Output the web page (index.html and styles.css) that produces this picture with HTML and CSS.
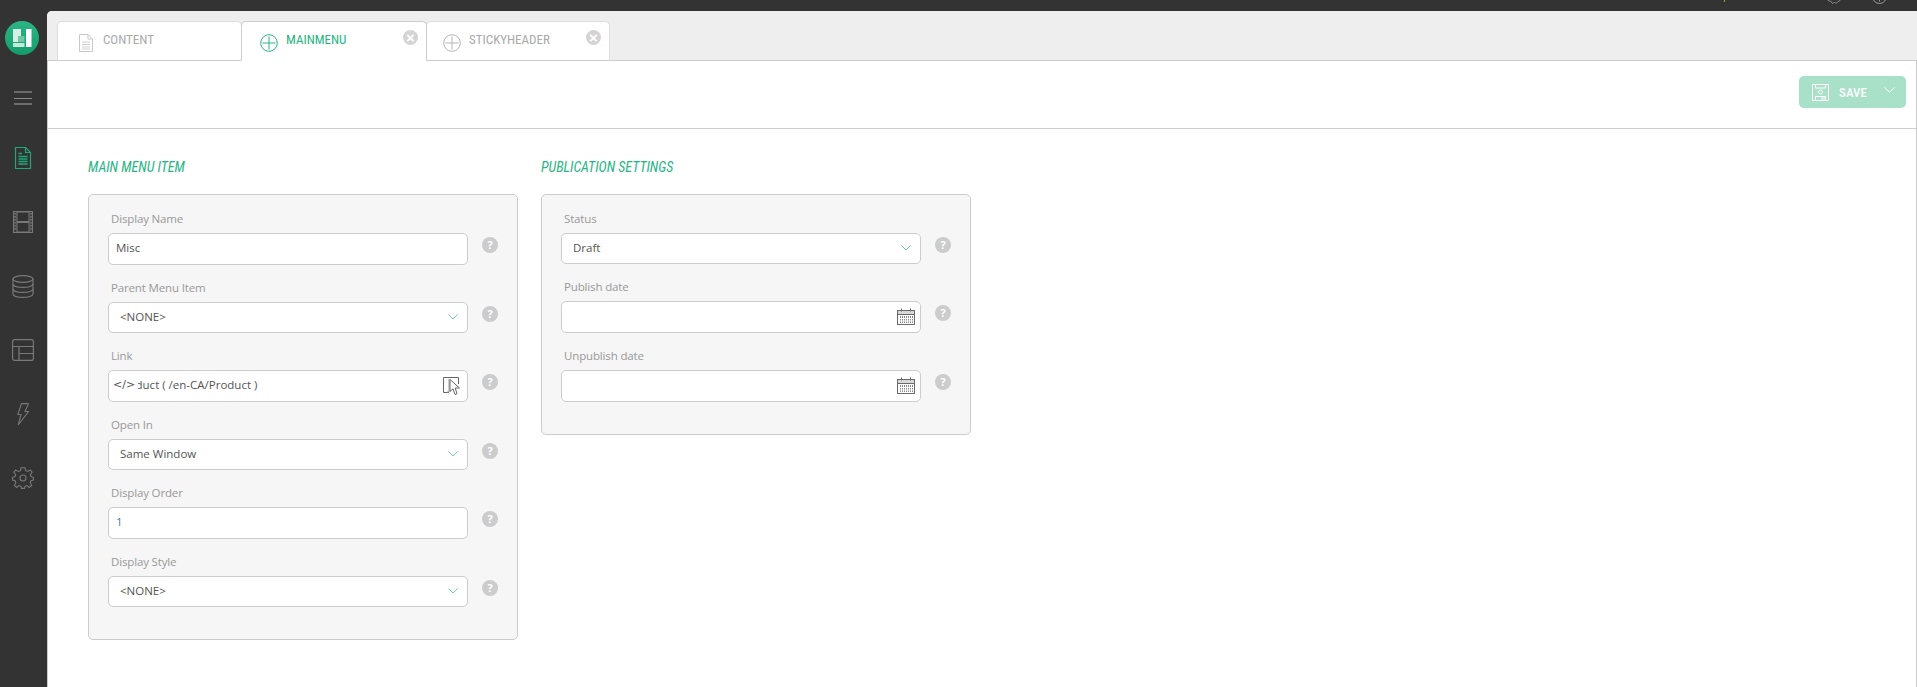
FILE: index.html
```html
<!DOCTYPE html>
<html lang="en">
<head>
<meta charset="utf-8">
<title>MainMenu</title>
<link rel="stylesheet" href="styles.css">
</head>
<body>
<div class="app">
  <header class="topbar">
    <svg class="top-dot" width="2" height="3" viewBox="0 0 2 3"><rect width="1" height="2" fill="#a89a4c"/></svg>
    <svg class="top-gear" width="14" height="4" viewBox="0 0 14 4"><path d="M0.5 0 L2 1 L3.5 1 L5 3 L6 3.5 L7.5 2 L9 3.5 L10.5 2 L12 1 L13.5 0" fill="none" stroke="#8a8a8a"/></svg>
    <svg class="top-info" width="15" height="4" viewBox="0 0 15 4"><circle cx="7.5" cy="-3.5" r="7" fill="none" stroke="#9a9a9a"/><path d="M7.5 0V1.5" stroke="#9a9a9a"/></svg>
  </header>
  <div class="workspace">
    <nav class="side">
      <div class="logo">
        <svg width="34" height="34" viewBox="0 0 34 34">
          <defs><linearGradient id="lg" x1="0" y1="0" x2="0" y2="1"><stop offset="0" stop-color="#2bb585"/><stop offset="1" stop-color="#159c6d"/></linearGradient></defs>
          <circle cx="17" cy="17" r="17" fill="url(#lg)"/>
          <rect x="8" y="8" width="8" height="13" fill="#d4efe5"/>
          <rect x="21" y="8" width="5.5" height="18" fill="#fff"/>
          <rect x="13" y="15" width="6.5" height="6" fill="#6fc9a8"/>
          <rect x="8" y="22" width="11.5" height="4" fill="#c4eadc"/>
        </svg>
      </div>
      <div class="burger"><span class="bar"></span><span class="bar bar-mid"></span><span class="bar"></span></div>
      <a class="nav-item">
        <svg width="18" height="24" viewBox="0 0 18 24" fill="none" stroke="#1fa877" stroke-width="1.2"><path d="M1.5 1.5H11.5L16.5 6.5V22.5H1.5Z"/><path d="M11.5 1.5V6.5H16.5"/><path d="M4.5 7.5H8M4.5 10.5H13.5M4.5 13H13.5M4.5 15.5H13.5M4.5 18H13.5" stroke-width="1.4"/></svg>
      </a>
      <a class="nav-item">
        <svg width="20" height="22" viewBox="0 0 20 22" fill="none" stroke="#787878"><rect x="0.5" y="0.5" width="19" height="21" fill="#5a5a5a" fill-opacity=".35"/><rect x="4" y="1" width="12" height="9.5" fill="#333"/><rect x="4" y="11.5" width="12" height="9.5" fill="#333"/><path d="M2 2V20M18 2V20" stroke-dasharray="1.5 1.5" stroke-width="1.5"/></svg>
      </a>
      <a class="nav-item">
        <svg width="22" height="23" viewBox="0 0 22 23" fill="none" stroke="#787878" stroke-width="1.2"><ellipse cx="11" cy="4" rx="10" ry="3.3"/><path d="M1 4V19C1 21 5.500 22.400 11 22.400S21 21 21 19V4"/><path d="M1 9C1 11 5.500 12.400 11 12.400S21 11 21 9M1 14C1 16 5.500 17.400 11 17.400S21 16 21 14"/></svg>
      </a>
      <a class="nav-item">
        <svg width="22" height="22" viewBox="0 0 22 22" fill="none" stroke="#787878" stroke-width="1.2"><rect x="0.6" y="0.6" width="20.800" height="20.800" rx="2"/><path d="M0.600 7.500H21.400M7 7.500V21.400M7 14.500H21.400"/></svg>
      </a>
      <a class="nav-item">
        <svg width="12" height="23" viewBox="0 0 12 23" fill="none" stroke="#787878" stroke-width="1.1"><path d="M4.500 0.600H11.400L8 8.500H11.500L1.200 22L4 11.500H0.800Z"/></svg>
      </a>
      <a class="nav-item">
        <svg width="22" height="22" viewBox="0 0 22 22" fill="none" stroke="#787878" stroke-width="1.1"><circle cx="11" cy="11" r="3"/><path d="M9 0.700H13L13.600 3.500L15.900 4.500L18.300 2.900L20.100 5.300L18.400 7.500L19 9.600L21.400 10.300V13L18.900 13.800L18.200 16L19.700 18.300L17.300 20.400L15.200 18.600L13 19.400L12.500 21.400H9.500L9 19.400L6.700 18.600L4.600 20.400L2.300 18.300L3.800 16L3.100 13.800L0.600 13V10.300L3 9.600L3.600 7.500L1.900 5.300L3.700 2.900L6.100 4.500L8.400 3.500Z"/></svg>
      </a>
    </nav>
    <main class="main">
      <div class="tabs">
        <div class="tab tab-content">
          <svg class="tab-icon" width="14" height="18" viewBox="0 0 14 18" fill="none" stroke="#c8c8c8"><path d="M0.500 0.500H9L13.500 5V17.500H0.500Z"/><path d="M9 0.500V5H13.500"/><path d="M3 8H11M3 10.500H11M3 13H11M3 15H11" stroke="#d0d0d0"/></svg>
          <span class="tab-label">CONTENT</span>
        </div>
        <div class="tab tab-main active">
          <svg class="tab-icon" width="18" height="18" viewBox="0 0 18 18" fill="none" stroke="#27b583"><circle cx="9" cy="9" r="8.300"/><path d="M9 2.500V15.500M2.500 9H15.500"/></svg>
          <span class="tab-label">MAINMENU</span>
          <span class="tab-close">×</span>
        </div>
        <div class="tab tab-sticky">
          <svg class="tab-icon" width="18" height="18" viewBox="0 0 18 18" fill="none" stroke="#b4b4b4"><circle cx="9" cy="9" r="8.300"/><path d="M9 2.500V15.500M2.500 9H15.500"/></svg>
          <span class="tab-label">STICKYHEADER</span>
          <span class="tab-close">×</span>
        </div>
      </div>
      <div class="panel">
        <div class="toolbar">
          <button class="save" type="button">
            <svg width="17" height="17" viewBox="0 0 17 17" fill="none" stroke="#fff"><path d="M0.500 0.500H16.500V16.500H0.500Z"/><path d="M3.500 0.500V4H13.500V0.500"/><circle cx="8.500" cy="8" r="2"/><path d="M3.500 16.500V12.500H13.500V16.500"/><rect x="9" y="13" width="4" height="3" fill="#fff" fill-opacity=".5" stroke="none"/></svg>
            <span class="save-label">SAVE</span>
            <svg class="save-chev" width="11" height="6" viewBox="0 0 11 6" fill="none" stroke="#fff"><path d="M0.500 0.500L5.500 5L10.500 0.500"/></svg>
          </button>
        </div>
        <div class="columns">
          <section class="column">
            <h2 class="heading">MAIN MENU ITEM</h2>
            <div class="card">
              <div class="field">
                <label class="label">Display Name</label>
                <div class="row"><input class="input" value="Misc"><span class="help">?</span></div>
              </div>
              <div class="field">
                <label class="label">Parent Menu Item</label>
                <div class="row"><div class="select"><span>&lt;NONE&gt;</span><svg class="chev" width="10" height="6" viewBox="0 0 10 6" fill="none" stroke="#6fd2ac"><path d="M0.500 0.500L5 5L9.500 0.500"/></svg></div><span class="help">?</span></div>
              </div>
              <div class="field">
                <label class="label">Link</label>
                <div class="row">
                  <div class="box link">
                    <span class="code">&lt;/&gt;</span>
                    <span class="link-clip"><span class="link-text">Product ( /en-CA/Product )</span></span>
                    <svg class="box-icon" width="18" height="19" viewBox="0 0 18 19" fill="none"><path d="M6 15.500H0.500V0.500H15.500V7" stroke="#666"/><path d="M6 2V15H4" stroke="#999"/><path d="M7 2.500V14.500L10 11.800L12 17.500L14 16.700L12.200 11H16.500Z" fill="#fff" stroke="#666"/></svg>
                  </div>
                  <span class="help">?</span>
                </div>
              </div>
              <div class="field">
                <label class="label">Open In</label>
                <div class="row"><div class="select"><span>Same Window</span><svg class="chev" width="10" height="6" viewBox="0 0 10 6" fill="none" stroke="#6fd2ac"><path d="M0.500 0.500L5 5L9.500 0.500"/></svg></div><span class="help">?</span></div>
              </div>
              <div class="field">
                <label class="label">Display Order</label>
                <div class="row"><input class="input input-number" value="1"><span class="help">?</span></div>
              </div>
              <div class="field">
                <label class="label">Display Style</label>
                <div class="row"><div class="select"><span>&lt;NONE&gt;</span><svg class="chev" width="10" height="6" viewBox="0 0 10 6" fill="none" stroke="#6fd2ac"><path d="M0.500 0.500L5 5L9.500 0.500"/></svg></div><span class="help">?</span></div>
              </div>
            </div>
          </section>
          <section class="column">
            <h2 class="heading">PUBLICATION SETTINGS</h2>
            <div class="card">
              <div class="field">
                <label class="label">Status</label>
                <div class="row"><div class="select"><span>Draft</span><svg class="chev" width="10" height="6" viewBox="0 0 10 6" fill="none" stroke="#6fd2ac"><path d="M0.500 0.500L5 5L9.500 0.500"/></svg></div><span class="help">?</span></div>
              </div>
              <div class="field">
                <label class="label">Publish date</label>
                <div class="row">
                  <div class="box">
                    <svg class="box-icon cal" width="18" height="17" viewBox="0 0 18 17" fill="none" stroke="#6a6a6a"><rect x="0.500" y="2.500" width="17" height="14"/><rect x="1" y="3" width="16" height="3" fill="#d8d8d8" stroke="none"/><path d="M0.500 6.500H17.500"/><path d="M4.500 0.500V3.500M13.500 0.500V3.500"/><path d="M3.500 8V15M5.500 8V15M7.500 8V15M9.500 8V15M11.500 8V15M13.500 8V15M15.500 8V15" stroke="#888"/><path d="M2.500 10.500H16M2.500 13H16" stroke="#fff"/></svg>
                  </div>
                  <span class="help">?</span>
                </div>
              </div>
              <div class="field">
                <label class="label">Unpublish date</label>
                <div class="row">
                  <div class="box">
                    <svg class="box-icon cal" width="18" height="17" viewBox="0 0 18 17" fill="none" stroke="#6a6a6a"><rect x="0.500" y="2.500" width="17" height="14"/><rect x="1" y="3" width="16" height="3" fill="#d8d8d8" stroke="none"/><path d="M0.500 6.500H17.500"/><path d="M4.500 0.500V3.500M13.500 0.500V3.500"/><path d="M3.500 8V15M5.500 8V15M7.500 8V15M9.500 8V15M11.500 8V15M13.500 8V15M15.500 8V15" stroke="#888"/><path d="M2.500 10.500H16M2.500 13H16" stroke="#fff"/></svg>
                  </div>
                  <span class="help">?</span>
                </div>
              </div>
            </div>
          </section>
        </div>
      </div>
    </main>
  </div>
</div>
</body>
</html>
```
FILE: styles.css
```css
* { box-sizing: border-box; }
html, body { margin: 0; height: 100%; overflow: hidden; }
body { background: #333; font-family: "Open Sans", "Noto Sans", sans-serif; font-size: 11.5px; color: #555; }

.app { display: flex; flex-direction: column; height: 687px; }

.topbar { height: 11px; flex: none; display: flex; align-items: flex-start; overflow: hidden; background: #333; padding-left: 1724px; }
.top-dot { margin-right: 101px; }
.top-gear { margin-right: 31px; }

.workspace { flex: 1; display: flex; min-height: 0; }

.side { width: 47px; flex: none; display: flex; flex-direction: column; align-items: center; background: #333; }
.logo { height: 59px; width: 100%; padding: 10px 0 0 5px; }
.logo svg { display: block; }
.burger { height: 56px; width: 18px; margin-left: -1px; display: flex; flex-direction: column; justify-content: center; gap: 4px; }
.bar { display: block; height: 2px; background: #6c6c6c; }
.bar-mid { height: 1px; margin: 0.5px 0; background: #8a8a8a; }
.nav-item { height: 64px; width: 100%; display: flex; align-items: center; justify-content: center; margin-left: -1px; }
.nav-item svg { display: block; }

.main { flex: 1; min-width: 0; display: flex; flex-direction: column; background: #fff; border-top-left-radius: 5px; overflow: hidden; }

.tabs { height: 50px; flex: none; display: flex; align-items: flex-end; padding-left: 10px; background: #eee; border-bottom: 1px solid #ccc; }
.tab { height: 40px; margin-bottom: -1px; display: flex; align-items: center; background: #fff; border: 1px solid #ddd; border-bottom-color: #ccc; border-radius: 5px 5px 0 0; color: #aaa; }
.tab-content { width: 185px; padding-left: 21px; }
.tab-main { width: 186px; padding-left: 18px; border-left: 1px solid #ccc; border-right: 1px solid #ccc; margin-left: -1px; }
.tab-sticky { width: 184px; padding-left: 16px; margin-left: -1px; }
.tab-icon { flex: none; margin: 3px 8px 0 0; }
.tab-content .tab-icon { margin-right: 10px; }
.tab-label { font-family: "Roboto Condensed", "Liberation Sans Narrow", Roboto, sans-serif; font-stretch: condensed; font-size: 13px; font-weight: 400; line-height: 16px; margin-top: -3px; }
.active { border-top-color: #ccc; border-bottom-color: #fff; color: #27b583; position: relative; z-index: 1; }
.tab-close { margin: -8px 8px 0 auto; width: 15px; height: 15px; border-radius: 50%; background: #d4d4d4; color: #fff; font: 700 15px/15px "Liberation Sans", sans-serif; text-align: center; }

.panel { flex: 1; display: flex; flex-direction: column; border-left: 1px solid #ccc; border-right: 1px solid #ccc; background: #fff; }
.toolbar { height: 68px; flex: none; display: flex; justify-content: flex-end; align-items: flex-start; padding: 15px 10px 0 0; border-bottom: 1px solid #ccc; }
.save { width: 107px; height: 32px; padding: 0 0 0 13px; display: flex; align-items: center; border: 0; border-radius: 5px; background: #a8e0c8; color: #fff; }
.save-label { margin-left: 10px; font-family: "Roboto Condensed", "Liberation Sans Narrow", Roboto, sans-serif; font-stretch: condensed; font-size: 13px; font-weight: 500; }
.save-chev { margin: -4px 11px 0 auto; }

.columns { display: flex; align-items: flex-start; gap: 23px; padding: 28px 0 0 40px; }
.column { width: 430px; }
.heading { margin: 0 0 17px; height: 20px; font-family: "Roboto Condensed", "Liberation Sans Narrow", Roboto, sans-serif; font-stretch: condensed; font-size: 14px; line-height: 20px; font-weight: 400; font-style: italic; color: #27b583; }

.card { border: 1px solid #ccc; border-radius: 5px; background: #f6f6f6; padding: 14px 0 19px 19px; }
.field { margin-bottom: 13px; }
.label { display: block; height: 20px; margin-bottom: 4px; padding-left: 3px; line-height: 20px; letter-spacing: -0.15px; color: #999; }
.row { display: flex; align-items: flex-start; }
.help { flex: none; width: 16px; height: 16px; margin: 4px 0 0 14px; border-radius: 50%; background: #ccc; color: #fff; font: 700 11px/16px "Open Sans", sans-serif; letter-spacing: 0; text-align: center; }

.input, .box, .select { width: 360px; border: 1px solid #ccc; border-radius: 5px; background: #fff; color: #555; font-family: inherit; font-size: 11.5px; }
.input { display: block; height: 32px; padding: 0 7px 4px; outline: 0; }
.input-number { color: #4a7fa0; }
.select { height: 31px; display: flex; align-items: center; justify-content: space-between; padding: 0 9px 2px 11px; }
.chev { flex: none; margin-top: 0; }
.box { height: 32px; display: flex; align-items: center; padding-right: 6px; }
.box-icon { margin-left: auto; flex: none; }
.cal { margin-right: -1px; margin-top: -2px; }
.link { padding: 0 6px 4px 4px; }
.link .box-icon { margin-top: 4px; }
.code { flex: none; width: 25px; font-family: "DejaVu Sans", sans-serif; font-size: 11px; color: #555; }
.link-clip { width: 132px; overflow: hidden; white-space: nowrap; }
.link-text { display: inline-block; margin-left: -21px; }
```
